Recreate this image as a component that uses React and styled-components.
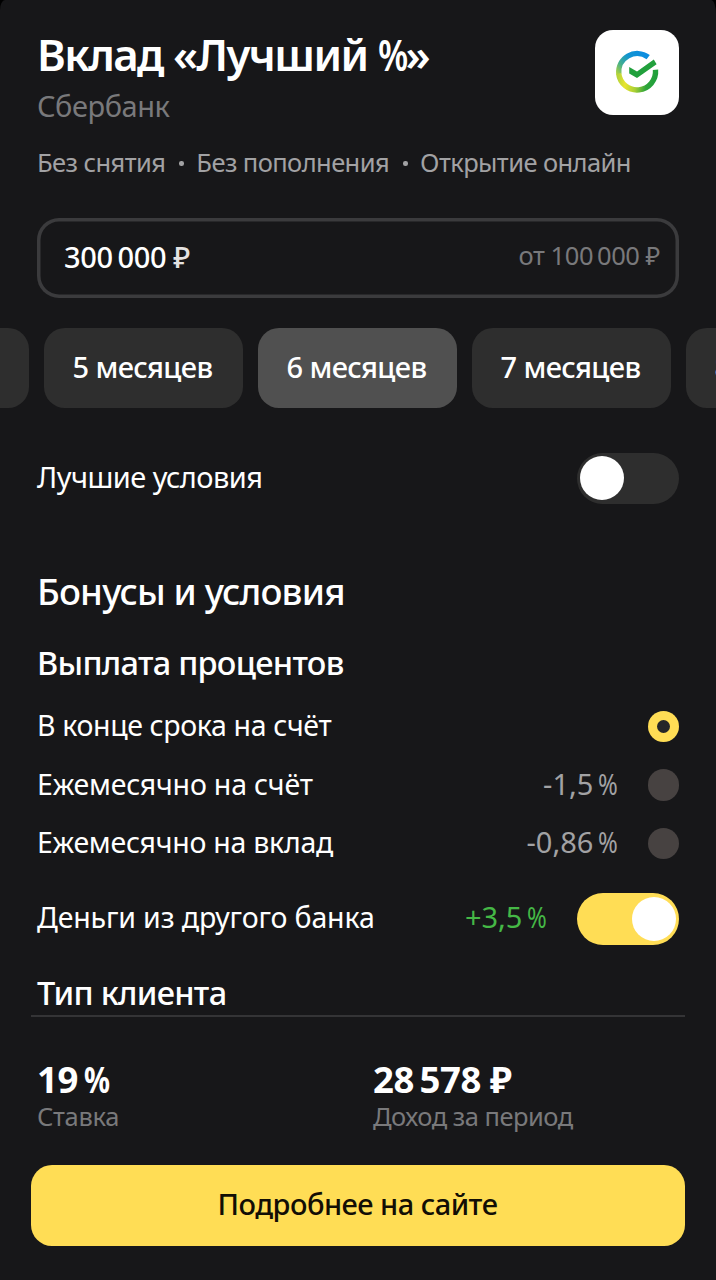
import { useState } from 'react';
import styled, { createGlobalStyle } from 'styled-components';

const GlobalStyle = createGlobalStyle`
  * {
    box-sizing: border-box;
  }

  body {
    margin: 0;
    background: #000;
    font-family: "Noto Sans", "Open Sans", sans-serif;
    color: #fff;
  }

  button {
    font: inherit;
    color: inherit;
    border: 0;
  }
`;

const Sheet = styled.main`
  display: flex;
  flex-direction: column;
  width: 716px;
  height: 1280px;
  overflow: hidden;
  background: #171719;
  border-radius: 5px 5px 0 0 / 10px 14px 0 0;
  white-space: nowrap;
`;

const Content = styled.div`
  height: 1014.5px;
  flex-shrink: 0;
  padding: 27px 37px 0;
  overflow: hidden;
`;

const Header = styled.header`
  display: flex;
  justify-content: space-between;
  height: 118.5px;
`;

const Title = styled.h1`
  margin: 0 0 6px;
  font-size: 43.8px;
  font-weight: 600;
  line-height: 54px;
  letter-spacing: -1.6px;
  word-spacing: 0.3px;
`;

const Bank = styled.div`
  padding-top: 0.5px;
  font-size: 29px;
  line-height: 36px;
  letter-spacing: -0.45px;
  color: #79797b;
`;

const LogoCard = styled.div`
  width: 84.5px;
  height: 84.5px;
  margin-top: 3px;
  border-radius: 18px;
  background: #fff;

  svg {
    display: block;
  }
`;

const Tags = styled.div`
  display: flex;
  align-items: center;
  font-size: 25.5px;
  line-height: 32px;
  letter-spacing: -0.58px;
  color: #a2a2a4;
`;

const Dot = styled.i`
  width: 4.5px;
  height: 4.5px;
  margin: 4px 12.5px 0 14px;
  border-radius: 50%;
  background: #a2a2a4;
`;

const AmountField = styled.div`
  display: flex;
  align-items: center;
  justify-content: space-between;
  height: 80.5px;
  margin-top: 40px;
  padding: 0 19px 0 27px;
  border-radius: 22px;
  box-shadow: inset 0 0 0 3.5px #3b3b3d;
`;

const Amount = styled.div`
  padding-bottom: 2px;
  font-size: 29px;
  font-weight: 500;
  letter-spacing: -0.3px;
`;

const MinAmount = styled.div`
  padding-bottom: 5px;
  font-size: 25.5px;
  letter-spacing: -0.4px;
  color: #79797b;
`;

const Ruble = styled.span`
  margin-left: ${(props) => props.$gap}px;
  color: ${(props) => props.$color || 'inherit'};
`;

const Terms = styled.div`
  display: flex;
  justify-content: center;
  gap: 14.7px;
  margin: 29.5px -37px 0 -38.5px;
  overflow: hidden;
`;

const Chip = styled.button`
  flex: 0 0 199.3px;
  height: 80.5px;
  padding: 0 1.5px 3px 0;
  border-radius: 21px;
  background: ${(props) => (props.$active ? '#505050' : '#2e2e2e')};
  font-size: 29px;
  font-weight: 500;
  letter-spacing: -0.62px;
`;

const SwitchRow = styled.div`
  display: flex;
  align-items: center;
  height: 51.5px;
  margin-top: ${(props) => props.$top}px;
`;

const Label = styled.span`
  flex: 1;
  padding-bottom: 3px;
  font-size: ${(props) => props.$size || 28.5}px;
  letter-spacing: ${(props) => props.$spacing || -0.25}px;
`;

const Toggle = styled.button`
  display: flex;
  align-items: center;
  justify-content: ${(props) => (props.$on ? 'flex-end' : 'flex-start')};
  width: 102.5px;
  height: 51.5px;
  padding: 0 3.5px;
  border-radius: 26px;
  background: ${(props) => (props.$on ? '#ffdd55' : '#2e2e2e')};

  &::before {
    content: '';
    width: 44px;
    height: 44px;
    border-radius: 50%;
    background: #fff;
  }
`;

const SectionTitle = styled.h2`
  margin: 64.5px 0 30px;
  font-size: 36.5px;
  font-weight: 500;
  line-height: 44px;
  letter-spacing: -0.82px;
`;

const GroupTitle = styled.h3`
  margin: 0;
  font-size: 32.5px;
  font-weight: 500;
  line-height: 40px;
  letter-spacing: -0.72px;
`;

const Options = styled.div`
  margin: 14.5px 0 20px;
`;

const Option = styled.div`
  display: flex;
  align-items: center;
  height: 58.7px;
`;

const Rate = styled.span`
  margin-right: 29.5px;
  padding-bottom: 4px;
  font-size: 29px;
  color: ${(props) => (props.$good ? '#45b846' : '#a2a2a4')};
`;

const Radio = styled.span`
  display: flex;
  align-items: center;
  justify-content: center;
  width: 31.5px;
  height: 31.5px;
  border-radius: 50%;
  background: ${(props) => (props.$checked ? '#ffdd55' : '#474241')};

  &::before {
    content: '';
    width: 13px;
    height: 13px;
    border-radius: 50%;
    background: ${(props) => (props.$checked ? '#252628' : 'transparent')};
  }
`;

const LastGroup = styled.div`
  margin-top: 28px;
`;

/* Narrow percent sign */
const Percent = styled.span`
  display: inline-block;
  transform: scaleX(${(props) => props.$scale || 0.82});
  transform-origin: left;
  margin-right: ${(props) => props.$pull || -0.15}em;
  letter-spacing: 0;
`;

const Footer = styled.footer`
  margin: 0 31px;
  padding-top: 40px;
  border-top: 2px solid #343436;
`;

const Stats = styled.div`
  display: grid;
  grid-template-columns: 336px 1fr;
  padding-left: 6px;
`;

const StatValue = styled.div`
  font-size: 36.5px;
  font-weight: 700;
  line-height: 44px;
  letter-spacing: -0.4px;
`;

const StatName = styled.div`
  font-size: 25.5px;
  line-height: 30px;
  letter-spacing: ${(props) => props.$spacing}px;
  color: #79797b;
`;

const MoreButton = styled.button`
  display: block;
  width: 100%;
  height: 80.5px;
  margin-top: 34.5px;
  padding: 0 1px 4px 0;
  border-radius: 21px;
  background: #ffdd55;
  color: #120e05;
  font-size: 29px;
  font-weight: 500;
  letter-spacing: -0.52px;
`;

const terms = ['4 месяца', '5 месяцев', '6 месяцев', '7 месяцев', '8 месяцев'];

const payouts = [
  { name: 'В конце срока на счёт', spacing: -0.36 },
  { name: 'Ежемесячно на счёт', rate: '-1,5', spacing: -0.2 },
  { name: 'Ежемесячно на вклад', rate: '-0,86', spacing: -0.25 },
];

function SberLogo() {
  return (
    <svg width="84.5" height="84.5" viewBox="0 0 84.5 84.5" fill="none">
      <defs>
        <linearGradient id="ringTop" gradientUnits="userSpaceOnUse" x1="50" y1="24" x2="24" y2="47">
          <stop offset="0" stopColor="#0c8de0" />
          <stop offset="0.4" stopColor="#1295d0" />
          <stop offset="0.72" stopColor="#45b08c" />
          <stop offset="1" stopColor="#b5d43a" />
        </linearGradient>
        <linearGradient id="ringBottom" gradientUnits="userSpaceOnUse" x1="23" y1="45" x2="60" y2="50">
          <stop offset="0" stopColor="#b5d43a" />
          <stop offset="0.22" stopColor="#e9e52c" />
          <stop offset="0.5" stopColor="#a9cf35" />
          <stop offset="0.78" stopColor="#2fa53a" />
          <stop offset="1" stopColor="#21a03c" />
        </linearGradient>
      </defs>
      <path d="M53.2 27.2 A18.5 18.5 0 0 0 23.8 44" stroke="url(#ringTop)" strokeWidth="5.4" />
      <path d="M23.7 43.6 A18.5 18.5 0 0 0 60.5 39.8" stroke="url(#ringBottom)" strokeWidth="5.4" />
      <path d="M34.2 37 L42 41.6 L58.8 29.6 L61.6 34.2 L42 48 L34.2 43.4 Z" fill="#21a03c" />
    </svg>
  );
}

export default function App() {
  const [term, setTerm] = useState('6 месяцев');
  const [best, setBest] = useState(false);
  const [otherBank, setOtherBank] = useState(true);
  const [payout, setPayout] = useState(0);

  return (
    <>
      <GlobalStyle />
      <Sheet>
        <Content>
          <Header>
            <div>
              <Title>Вклад «Лучший <Percent $scale={0.79} $pull={-0.24}>%</Percent>»</Title>
              <Bank>Сбербанк</Bank>
            </div>
            <LogoCard><SberLogo /></LogoCard>
          </Header>

          <Tags>
            <span>Без снятия</span>
            <Dot />
            <span>Без пополнения</span>
            <Dot />
            <span>Открытие онлайн</span>
          </Tags>

          <AmountField>
            <Amount>300&#8201;000<Ruble $gap={7} $color="#e4e2e1">₽</Ruble></Amount>
            <MinAmount>от 100&#8201;000<Ruble $gap={6}>₽</Ruble></MinAmount>
          </AmountField>

          <Terms>
            {terms.map((item) => (
              <Chip key={item} $active={item === term} onClick={() => setTerm(item)}>
                {item}
              </Chip>
            ))}
          </Terms>

          <SwitchRow $top={44.5}>
            <Label $size={29} $spacing={-0.55}>Лучшие условия</Label>
            <Toggle $on={best} onClick={() => setBest(!best)} />
          </SwitchRow>

          <SectionTitle>Бонусы и условия</SectionTitle>
          <GroupTitle>Выплата процентов</GroupTitle>

          <Options>
            {payouts.map((item, i) => (
              <Option key={item.name} onClick={() => setPayout(i)}>
                <Label $spacing={item.spacing}>{item.name}</Label>
                {item.rate && <Rate>{item.rate}&#8201;<Percent>%</Percent></Rate>}
                <Radio $checked={i === payout} />
              </Option>
            ))}
          </Options>

          <SwitchRow $top={0}>
            <Label $spacing={-0.14}>Деньги из другого банка</Label>
            <Rate $good>+3,5&#8201;<Percent>%</Percent></Rate>
            <Toggle $on={otherBank} onClick={() => setOtherBank(!otherBank)} />
          </SwitchRow>

          <LastGroup>
            <GroupTitle>Тип клиента</GroupTitle>
          </LastGroup>
        </Content>

        <Footer>
          <Stats>
            <div>
              <StatValue>19&#8201;<Percent $scale={0.79}>%</Percent></StatValue>
              <StatName $spacing={-0.3}>Ставка</StatName>
            </div>
            <div>
              <StatValue>28&#8201;578<Ruble $gap={9}>₽</Ruble></StatValue>
              <StatName $spacing={-0.5}>Доход за период</StatName>
            </div>
          </Stats>
          <MoreButton>Подробнее на сайте</MoreButton>
        </Footer>
      </Sheet>
    </>
  );
}
